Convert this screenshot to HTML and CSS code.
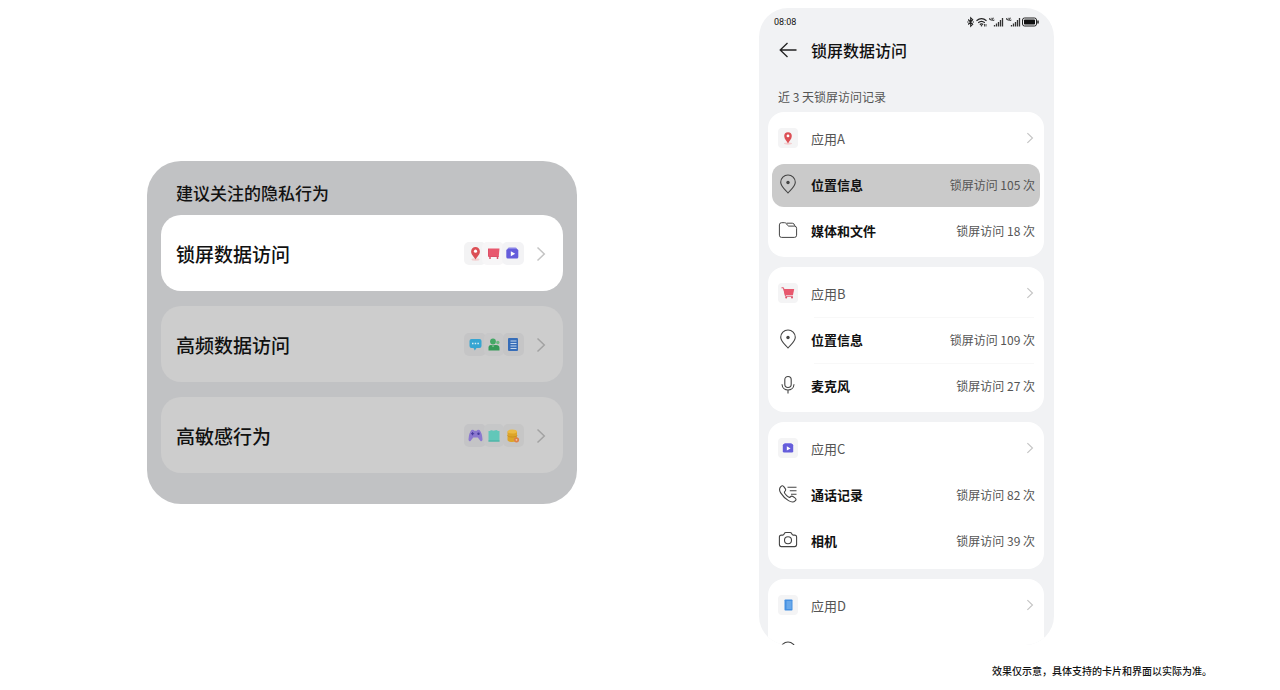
FILE: index.html
```html
<!DOCTYPE html>
<html lang="zh-CN">
<head>
<meta charset="utf-8">
<meta name="viewport" content="width=device-width, initial-scale=1">
<title>锁屏数据访问</title>
<link rel="stylesheet" href="styles.css">
</head>
<body>
<svg class="sprite" aria-hidden="true">
  <symbol id="chevron" viewBox="0 0 10 16"><path d="M1.500 1.500 8.300 8l-6.800 6.500" fill="none" stroke="currentColor" stroke-width="1.500"/></symbol>
  <symbol id="app-map" viewBox="0 0 20 20"><ellipse cx="10" cy="15.600" rx="4" ry="1.100" fill="#f3cfd0"/><path d="M10 15.400C8.900 13.400 6.200 11 6.200 8a3.800 3.800 0 0 1 7.600 0c0 3-2.700 5.400-3.800 7.400Z" fill="#dc4f55"/><circle cx="10" cy="7.900" r="1.400" fill="#fff"/></symbol>
  <symbol id="app-cart" viewBox="0 0 20 20"><path d="M3.500 4.800h2l2 8.400h7.300" fill="none" stroke="#dc5068"/><path d="M5.500 6h10.700l-1.200 6H7Z" fill="#e8586e"/><circle cx="8.200" cy="14.400" r="1" fill="#dc5068"/><circle cx="14" cy="14.400" r="1" fill="#dc5068"/></symbol>
  <symbol id="app-video" viewBox="0 0 20 20"><path d="M6 6.200q0-1.200 1.200-1.200h5.600q1.200 0 1.200 1.200Z" fill="#8a84e8"/><rect x="4.800" y="6" width="10.400" height="8.600" rx="1.300" fill="#655ddb"/><path d="m8.800 8.200 3.800 2.200-3.800 2.200Z" fill="#fff"/></symbol>
  <symbol id="pin" viewBox="0 0 20 20"><path d="M10 19C7.500 16 2.700 12.600 2.700 8.300a7.300 7.300 0 0 1 14.600 0C17.300 12.600 12.500 16 10 19Z" fill="none" stroke="currentColor" stroke-width="1.100"/><circle cx="10" cy="8.500" r="1.700" fill="currentColor"/></symbol>
  <symbol id="folder" viewBox="0 0 20 20"><path d="M1.400 15.200V4.900q0-2.200 2.200-2.200h3q1 0 1.700.9l1.300 1.800q.5.700 1.400.7h5.400q2.200 0 2.200 2.200v6.900q0 2.200-2.200 2.200H3.600q-2.200 0-2.200-2.200ZM8.500 3.200h5.800q2 0 2.600 2.700" fill="none" stroke="currentColor"/></symbol>
  <symbol id="mic" viewBox="0 0 20 20"><rect x="6.800" y="1.500" width="6.400" height="11" rx="3.200" fill="none" stroke="currentColor" stroke-width="1.100"/><path d="M4 9.300c.4 7.600 11.600 7.600 12 0M10 15v3.500" fill="none" stroke="currentColor" stroke-width="1.100"/></symbol>
  <symbol id="call-log" viewBox="0 0 20 20"><path d="M2.800 2.600c1.400-1.400 2.200-1.100 3.200.3l1.400 2c.8 1.300.2 1.900-.7 2.700-.5.5-.4.900 0 1.600 1 1.500 2.300 2.800 3.900 3.900.7.400 1.100.4 1.600-.1.900-.9 1.500-1.300 2.700-.5l2 1.400c1.300 1 1.500 1.700.2 3-1.600 1.600-3.900 1.300-6.600-.3C7.100 14.600 4.800 12.300 2.700 8.900 1.200 6.500 1.300 4.100 2.800 2.600ZM9.500 3.200h9M11.800 6.700h6.700M13 10.200h5.500" fill="none" stroke="currentColor" stroke-width="1.100"/></symbol>
  <symbol id="camera" viewBox="0 0 20 20"><path d="M3.400 5.100h1.400q.8 0 1.200-.8l.5-1q.4-.8 1.300-.8h4.400q.9 0 1.300.8l.5 1q.4.800 1.200.8h1.400q2 0 2 2v7.500q0 2-2 2H3.400q-2 0-2-2V7.100q0-2 2-2Z" fill="none" stroke="currentColor" stroke-width="1.100"/><circle cx="10" cy="10.300" r="3.500" fill="none" stroke="currentColor" stroke-width="1.100"/></symbol>
</svg>

<main class="stage">
  <section class="privacy" aria-labelledby="privacy-title">
    <h2 class="privacy__title" id="privacy-title">建议关注的隐私行为</h2>
    <div class="privacy__list">
      <button class="behavior behavior--active" type="button">
        <span class="behavior__name">锁屏数据访问</span>
        <svg class="behavior__apps" viewBox="0 0 60 24" aria-hidden="true">
          <rect width="22" height="23" rx="5" fill="#f3f3f4"/><rect x="18" y="0" width="22" height="23" rx="5" fill="#f7f6f7"/><rect x="38" width="22" height="23" rx="5" fill="#f3f3f5"/>
          <ellipse cx="11.500" cy="17.500" rx="4" ry="1.200" fill="#f3cfd0"/>
          <path d="M11.500 17.600c-1-2.400-4.400-4.700-4.400-8.200a4.400 4.400 0 0 1 8.800 0c0 3.500-3.400 5.800-4.400 8.200Z" fill="#dc4f55"/><circle cx="11.500" cy="9.200" r="1.600" fill="#fff"/>
          <path d="M24 6.500h11.500l-.7 7.500H25Z" fill="#e8586e"/><path d="M24.500 7v7.500h10.300" fill="none" stroke="#dc5068"/><path d="M26 14.500V17m7.500-2.500V17" stroke="#dc5068" stroke-width="1.500"/>
          <path d="M43.500 7q0-1.500 1.500-1.500h6.500q1.500 0 1.500 1.500Z" fill="#8a84e8"/><rect x="42.300" y="7" width="12" height="9.500" rx="1.500" fill="#655ddb"/><path d="m46.800 9.200 4.400 2.500-4.400 2.500Z" fill="#fff"/>
        </svg>
        <svg class="behavior__chevron" aria-hidden="true"><use href="#chevron"/></svg>
      </button>
      <button class="behavior" type="button">
        <span class="behavior__name">高频数据访问</span>
        <svg class="behavior__apps" viewBox="0 0 60 24" aria-hidden="true">
          <rect width="22" height="23" rx="5" fill="#c5c5c6"/><rect x="20" width="20" height="23" rx="5" fill="#c8c8c9"/><rect x="39" width="21" height="23" rx="5" fill="#c5c5c6"/>
          <path d="M7.500 6h8q2 0 2 2v5q0 2-2 2h-3l-1.700 2.600L9.500 15h-2q-2 0-2-2V8q0-2 2-2Z" fill="#36a5d2"/><path d="M8 10.500h1.500m1.200 0h1.500m1.200 0h1.500" stroke="#d8eef5" stroke-width="1.300"/>
          <circle cx="29" cy="8.500" r="2.900" fill="#45a866"/><circle cx="33.800" cy="9.500" r="1.700" fill="#6dbb80"/><path d="M24.500 17.500v-3q0-2.500 2.500-2.500h5q3.500 0 3.500 3v2.500Z" fill="#369a58"/><path d="M27.500 12.500l1.500 1.800 1.500-1.800" fill="#8ccc9d"/>
          <rect x="44" y="5" width="10" height="13" rx="1" fill="#366db8"/><path d="M46.500 8h6m-6 2.500h6m-6 2.500h6m-6 2.500h6" stroke="#c2d7ed"/>
        </svg>
        <svg class="behavior__chevron" aria-hidden="true"><use href="#chevron"/></svg>
      </button>
      <button class="behavior" type="button">
        <span class="behavior__name">高敏感行为</span>
        <svg class="behavior__apps" viewBox="0 0 60 24" aria-hidden="true">
          <rect width="22" height="23" rx="5" fill="#c4c4c6"/><rect x="20" width="20" height="23" rx="5" fill="#c6c7c8"/><rect x="39" width="21" height="23" rx="5" fill="#c6c6c6"/>
          <path d="M7.500 6q2-1 2.800.7h2.400Q13.500 5 15.500 6q2.700 3 3 9.500-.2 2.500-2 1.500l-2.700-3.500H9.200L6.500 17q-1.800 1-2-1.500.3-6.500 3-9.500Z" fill="#8b78cf"/><path d="M7 9.700h3.200M8.600 8.100v3.200" stroke="#453b9c"/><circle cx="14.500" cy="9.700" r="1.200" fill="#453b9c"/>
          <path d="M24.500 7h2V6l3 .8 3-.8 1.500 1h1.500v10.500h-11Z" fill="#62c7b9"/><path d="M24.500 17h11" stroke="#45ad9f"/>
          <path d="M43.500 7.500v8.500c0 2.500 9.500 2.500 9.500 0V7.500Z" fill="#dda529"/><ellipse cx="48.200" cy="7.500" rx="4.700" ry="2" fill="#ebbb45"/><path d="M43.500 11.500c1 2 8.500 2 9.500 0" fill="none" stroke="#c99023"/><circle cx="52.500" cy="15.800" r="2.600" fill="#df8046"/><circle cx="52.500" cy="15.800" r=".9" fill="#efc8a9"/>
        </svg>
        <svg class="behavior__chevron" aria-hidden="true"><use href="#chevron"/></svg>
      </button>
    </div>
  </section>

  <section class="phone" aria-labelledby="phone-title">
    <div class="status">
      <span>08:08</span>
      <svg class="status__icons" viewBox="0 0 72 12" aria-hidden="true">
        <path d="M1.200 3.500 5.700 8.300 3.700 10.200V1.800l2 1.900L1.200 8.500M.2 6h1.300m4.200 0H7" fill="none" stroke="#222" stroke-width="1.100"/>
        <path d="M9.500 4.700q5-4.200 10 0M11.200 6.700q3.300-2.700 6.600 0M12.800 8.600q1.700-1.300 3.400 0" fill="none" stroke="#222" stroke-width="1.200"/><circle cx="14.500" cy="9.700" r=".8" fill="#222"/><path d="M17.500 8v2.500M19 8v2.500" stroke="#222" stroke-width=".8"/>
        <path d="M22.500 2v1.500H24M24.200 1.800V5M27 2.200h-1.500v2.300H27V3.500" fill="none" stroke="#333" stroke-width=".8"/><path d="M27.500 10.500V9M29.500 10.500V7.500M31.500 10.500V6M33.500 10.500V4M35.500 10.500V2" stroke="#333" stroke-width="1.300"/>
        <path d="M39.500 2v1.500H41M41.200 1.800V5M44 2.200h-1.500v2.300H44V3.500" fill="none" stroke="#333" stroke-width=".8"/><path d="M44.500 10.500V9M46.500 10.500V7.500M48.500 10.500V6M50.500 10.500V4M52.500 10.500V2" stroke="#333" stroke-width="1.300"/>
        <rect x="55.500" y="2" width="14" height="8" rx="2" fill="none" stroke="#222"/><rect x="57" y="3.500" width="11" height="5" rx=".8" fill="#111"/><path d="M71 4.500v3" stroke="#222" stroke-width="1.500"/>
      </svg>
    </div>
    <header class="bar">
      <button class="bar__back" type="button" aria-label="返回"><svg viewBox="0 0 18 16" aria-hidden="true"><path d="M17.500 8H1.200M8.500 1 1.200 8l7.300 7" fill="none" stroke="#222" stroke-width="1.300"/></svg></button>
      <h1 class="bar__title" id="phone-title">锁屏数据访问</h1>
    </header>
    <p class="caption">近 3 天锁屏访问记录</p>
    <div class="cards">
      <ul class="card">
        <li class="card__row"><button class="entry" type="button"><svg class="entry__app" aria-hidden="true"><use href="#app-map"/></svg><span class="entry__app-name">应用A</span><svg class="entry__chevron" aria-hidden="true"><use href="#chevron"/></svg></button></li>
        <li class="card__row"><button class="entry entry--selected" type="button"><svg class="entry__icon" aria-hidden="true"><use href="#pin"/></svg><span class="entry__name">位置信息</span><span class="entry__count">锁屏访问 105 次</span></button></li>
        <li class="card__row"><button class="entry" type="button"><svg class="entry__icon" aria-hidden="true"><use href="#folder"/></svg><span class="entry__name">媒体和文件</span><span class="entry__count">锁屏访问 18 次</span></button></li>
      </ul>
      <ul class="card card--divided">
        <li class="card__row"><button class="entry" type="button"><svg class="entry__app" aria-hidden="true"><use href="#app-cart"/></svg><span class="entry__app-name">应用B</span><svg class="entry__chevron" aria-hidden="true"><use href="#chevron"/></svg></button></li>
        <li class="card__row"><button class="entry" type="button"><svg class="entry__icon" aria-hidden="true"><use href="#pin"/></svg><span class="entry__name">位置信息</span><span class="entry__count">锁屏访问 109 次</span></button></li>
        <li class="card__row"><button class="entry" type="button"><svg class="entry__icon" aria-hidden="true"><use href="#mic"/></svg><span class="entry__name">麦克风</span><span class="entry__count">锁屏访问 27 次</span></button></li>
      </ul>
      <ul class="card card--roomy">
        <li class="card__row"><button class="entry" type="button"><svg class="entry__app" aria-hidden="true"><use href="#app-video"/></svg><span class="entry__app-name">应用C</span><svg class="entry__chevron" aria-hidden="true"><use href="#chevron"/></svg></button></li>
        <li class="card__row"><button class="entry" type="button"><svg class="entry__icon" aria-hidden="true"><use href="#call-log"/></svg><span class="entry__name">通话记录</span><span class="entry__count">锁屏访问 82 次</span></button></li>
        <li class="card__row"><button class="entry" type="button"><svg class="entry__icon" aria-hidden="true"><use href="#camera"/></svg><span class="entry__name">相机</span><span class="entry__count">锁屏访问 39 次</span></button></li>
      </ul>
      <ul class="card">
        <li class="card__row"><button class="entry" type="button"><svg class="entry__app" viewBox="0 0 20 20" aria-hidden="true"><rect x="6.500" y="4.500" width="8" height="11" rx=".8" fill="#4590e2"/><path d="M8.500 7h5m-5 2h5m-5 2h5m-5 2h5" stroke="#8fc1f2"/></svg><span class="entry__app-name">应用D</span><svg class="entry__chevron" aria-hidden="true"><use href="#chevron"/></svg></button></li>
        <li class="card__row"><button class="entry" type="button" aria-label="位置信息"><svg class="entry__icon" aria-hidden="true"><use href="#pin"/></svg></button></li>
      </ul>
    </div>
  </section>
</main>
<footer class="note">效果仅示意，具体支持的卡片和界面以实际为准。</footer>
</body>
</html>
```
FILE: styles.css
```css
* {
  box-sizing: border-box;
}

body {
  display: flex;
  flex-direction: column;
  height: 100vh;
  margin: 0;
  background: #fff;
  color: #111;
  font-family: "Noto Sans CJK SC", sans-serif;
}

button {
  border: 0;
  background: none;
  color: inherit;
  font: inherit;
  text-align: left;
  cursor: pointer;
}

svg {
  display: block;
  flex: none;
}

.sprite {
  position: absolute;
  width: 0;
  height: 0;
}

.stage {
  display: grid;
  flex: 1;
  grid-template-columns: 147fr 430fr 182fr 295fr 226fr;
  grid-template-rows: minmax(0, 1fr);
  min-height: 0;
  padding-top: 8px;
}

/* Privacy behaviours panel */
.privacy {
  grid-column: 2;
  align-self: center;
  margin-top: 12px;
  padding: 20px 14px 31px;
  border-radius: 34px;
  background: #c1c2c4;
}

.privacy__title {
  margin: 0 0 10px;
  padding-left: 15px;
  font-size: 17px;
  font-weight: 500;
  line-height: 24px;
}

.privacy__list {
  display: flex;
  flex-direction: column;
  gap: 15px;
}

.behavior {
  display: flex;
  align-items: center;
  gap: 12px;
  width: 100%;
  height: 76px;
  padding: 2px 17px 0 15px;
  border-radius: 20px;
  background: #cdcdcd;
  color: #111;
}

.behavior--active {
  background: #fff;
}

.behavior__name {
  flex: 1;
  font-size: 19px;
  font-weight: 500;
  line-height: 28px;
}

.behavior__apps {
  width: 60px;
  height: 24px;
}

.behavior__chevron {
  width: 10px;
  height: 16px;
  color: #a2a2a2;
}

.behavior--active .behavior__chevron {
  color: #c4c4c4;
}

/* Phone screen */
.phone {
  grid-column: 4;
  overflow: hidden;
  border-radius: 29px;
  background: #f1f2f4;
}

.status {
  display: flex;
  align-items: center;
  justify-content: space-between;
  height: 28px;
  padding: 0 15px;
  font-family: Roboto, sans-serif;
  font-size: 9px;
}

.status__icons {
  width: 72px;
  height: 12px;
}

.bar {
  display: flex;
  align-items: center;
  gap: 14px;
  height: 30px;
  padding: 0 0 2px 20px;
}

.bar__back {
  padding: 0;
}

.bar__back svg {
  width: 18px;
  height: 16px;
}

.bar__title {
  margin: 0;
  font-size: 16px;
  font-weight: 500;
}

.caption {
  margin: 22px 19px 6px;
  color: #555;
  font-size: 12px;
  line-height: 18px;
}

.cards {
  display: flex;
  flex-direction: column;
  gap: 10px;
  padding: 0 10px 0 9px;
}

.card {
  margin: 0;
  padding: 4px 0 3px;
  border-radius: 16px;
  background: #fff;
  list-style: none;
}

.card--roomy {
  padding-bottom: 5px;
}

.card__row {
  height: 46px;
  padding: 2px 4px 1px;
}

.card--divided .card__row + .card__row {
  background: linear-gradient(#f8f8f8, #f8f8f8) 46px 0 / calc(100% - 56px) 1px no-repeat;
}

.entry {
  display: flex;
  align-items: center;
  gap: 13px;
  width: 100%;
  height: 43px;
  padding: 0 5px 3px 6px;
  border-radius: 12px;
}

.entry--selected {
  background: #cacaca;
}

.entry__app,
.entry__icon {
  width: 20px;
  height: 20px;
}

.entry__app {
  border-radius: 4px;
  background: #f4f4f5;
}

.entry__icon {
  color: #444;
}

.entry__app-name {
  flex: 1;
  color: #555;
  font-size: 13px;
}

.entry__name {
  flex: 1;
  color: #111;
  font-size: 13px;
  font-weight: 700;
}

.entry__count {
  color: #555;
  font-size: 12px;
}

.entry__chevron {
  width: 10px;
  height: 12px;
  color: #c4c4c4;
}

.note {
  flex: none;
  height: 45px;
  padding: 18px 68px 0 0;
  color: #111;
  font-size: 10px;
  font-weight: 500;
  line-height: 16px;
  text-align: right;
}
```
